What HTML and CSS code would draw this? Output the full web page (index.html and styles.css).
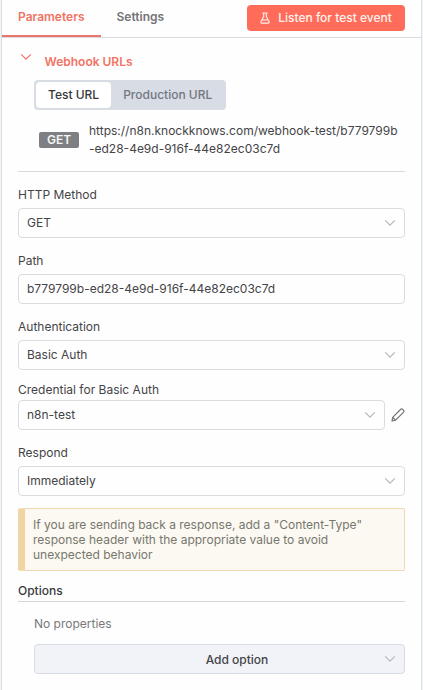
FILE: index.html
```html
<!DOCTYPE html>
<html lang="en">
<head>
<meta charset="utf-8">
<title>Webhook parameters</title>
<link rel="stylesheet" href="styles.css">
</head>
<body>
<svg class="defs" aria-hidden="true"><symbol id="chevron" viewBox="0 0 12 8"><path d="M1.2 1.3 6 6.1l4.8-4.8" fill="none" stroke="currentColor" stroke-width="1.2"/></symbol></svg>
<main class="panel">
  <header class="header">
    <nav class="tabs">
      <a class="tab tab-active">Parameters</a>
      <a class="tab">Settings</a>
    </nav>
    <button class="listen">
      <svg class="flask" viewBox="0 0 10 12"><path d="M2.8 1h4.4M3.7 1v3.5L1 9.6c-.4.8 0 1.5.8 1.5h6.4c.8 0 1.2-.7.8-1.5L6.3 4.5V1M2.2 8h5.6" fill="none" stroke="currentColor" stroke-width="1.1" stroke-linecap="round" stroke-linejoin="round"/></svg>
      <span>Listen for test event</span>
    </button>
  </header>
  <div class="content">
    <section class="webhooks">
      <h2 class="webhooks-title"><svg class="chevron"><use href="#chevron"/></svg><span>Webhook URLs</span></h2>
      <div class="switch">
        <button class="switch-item switch-on">Test URL</button>
        <button class="switch-item">Production URL</button>
      </div>
      <div class="url-row">
        <span class="method">GET</span>
        <p class="url">https://n8n.knockknows.com/webhook-test/b779799b<br>-ed28-4e9d-916f-44e82ec03c7d</p>
      </div>
    </section>
    <div class="field"><label class="label">HTTP Method</label><div class="input">GET<svg class="chevron"><use href="#chevron"/></svg></div></div>
    <div class="field"><label class="label">Path</label><div class="input">b779799b-ed28-4e9d-916f-44e82ec03c7d</div></div>
    <div class="field"><label class="label">Authentication</label><div class="input">Basic Auth<svg class="chevron"><use href="#chevron"/></svg></div></div>
    <div class="field credential"><label class="label">Credential for Basic Auth</label>
      <div class="credential-row"><div class="input">n8n-test<svg class="chevron"><use href="#chevron"/></svg></div>
      <svg class="pencil" viewBox="0 0 14 14"><path d="M1 13l.7-3.7 7.8-7.8c.7-.7 1.6-.7 2.3-.1l.7.7c.6.7.6 1.6-.1 2.3L4.6 12.2zM1.8 9.3l2.8 2.8" fill="none" stroke="currentColor" stroke-width="1.2" stroke-linejoin="round"/></svg></div>
    </div>
    <div class="field"><label class="label">Respond</label><div class="input">Immediately<svg class="chevron"><use href="#chevron"/></svg></div></div>
    <div class="notice">If you are sending back a response, add a "Content-Type"<br>response header with the appropriate value to avoid<br>unexpected behavior</div>
    <section>
      <h3 class="options-title">Options</h3>
      <div class="options">
        <p class="empty">No properties</p>
        <button class="add"><span>Add option</span><svg class="chevron"><use href="#chevron"/></svg></button>
      </div>
    </section>
  </div>
</main>
</body>
</html>
```

FILE: styles.css
```css
* { box-sizing: border-box; }
body { margin: 0; background: #f3f4f7; font-family: Inter, "Liberation Sans", sans-serif; font-size: 12px; color: #444447; }
h2, h3, p { margin: 0; }
button { border: 0; padding: 0; font: inherit; color: inherit; }
svg { display: block; flex: none; }
.defs { position: absolute; width: 0; height: 0; }
.panel { width: 421px; height: 690px; margin-left: 1px; overflow: hidden; background: #fefefe; border: solid #dbdee6; border-width: 0 1px; }
.header { display: flex; justify-content: space-between; height: 38px; padding-right: 16px; border-bottom: 1px solid #d8dbe2; }
.tabs { display: flex; }
.tab { height: 37px; padding: 0 16px; line-height: 34px; font-weight: 600; color: #737477; }
.tab-active { border-bottom: 2px solid #e8766a; color: #f27364; }
.listen { display: flex; align-items: center; justify-content: center; gap: 8px; width: 158px; height: 26px; margin-top: 5px; padding-bottom: 1px; border-radius: 4px; background: #ff6d5a; color: #fff2ef; font-weight: 500; }
.flask { width: 10px; height: 12px; }
.content { padding: 0 16px; }
.webhooks { height: 134px; border-bottom: 1px solid #d9dadd; }
.webhooks-title { display: flex; height: 42px; padding: 15px 0 0 2px; gap: 12.5px; font-size: 12px; line-height: 18px; font-weight: 600; color: #f27364; }
.chevron { width: 12px; height: 8px; color: #b5b7bb; }
.webhooks-title .chevron { color: #f27364; }
.switch { display: inline-flex; height: 30px; margin-left: 16px; padding: 2px; border-radius: 4px; background: #d8dce5; vertical-align: top; }
.switch-item { height: 26px; padding: 0 12px 1px; border-radius: 4px; background: transparent; font-weight: 500; color: #737780; }
.switch-on { background: #fff; color: #36373a; }
.url-row { display: flex; margin: 12px 0 0 21px; gap: 10px; }
.method { width: 40px; height: 16px; margin-top: 10px; border-radius: 2px; background: #7d7f82; color: #f5f5f5; font-weight: 600; line-height: 16px; text-align: center; }
.url { line-height: 18px; white-space: nowrap; }
.field { height: 66px; padding-top: 14px; }
.label { display: block; height: 22px; line-height: 18px; }
.input { display: flex; align-items: center; justify-content: space-between; height: 30px; padding: 0 8px; border: 1px solid #d9dce1; border-radius: 4px; line-height: 14px; padding-bottom: 1px; }
.credential { height: 60px; padding-top: 11px; }
.credential .label { height: 19px; }
.credential-row { display: flex; align-items: center; gap: 6px; }
.credential-row .input { width: 367px; }
.pencil { width: 14px; height: 14px; color: #737477; }
.notice { height: 63px; margin-top: 12px; padding: 8px; border: 1px solid #f0d9b2; border-left: 7px solid #f1d4a3; border-radius: 2px; background: #fbf9f1; line-height: 15px; color: #77776f; white-space: nowrap; }
.options-title { height: 31px; padding-top: 11px; border-bottom: 1px solid #d5d7dc; font-size: 12px; line-height: 18px; font-weight: 500; color: #3a3a3d; }
.options { padding-left: 16px; }
.empty { height: 42px; padding-top: 13px; line-height: 18px; color: #77787b; }
.add { display: grid; grid-template-columns: 1fr 12px; align-items: center; width: 100%; height: 30px; padding: 0 8px 0 55px; border: 1px solid #d8dce5; border-radius: 4px; background: #f1f3f8; font-weight: 450; text-align: center; }
```
